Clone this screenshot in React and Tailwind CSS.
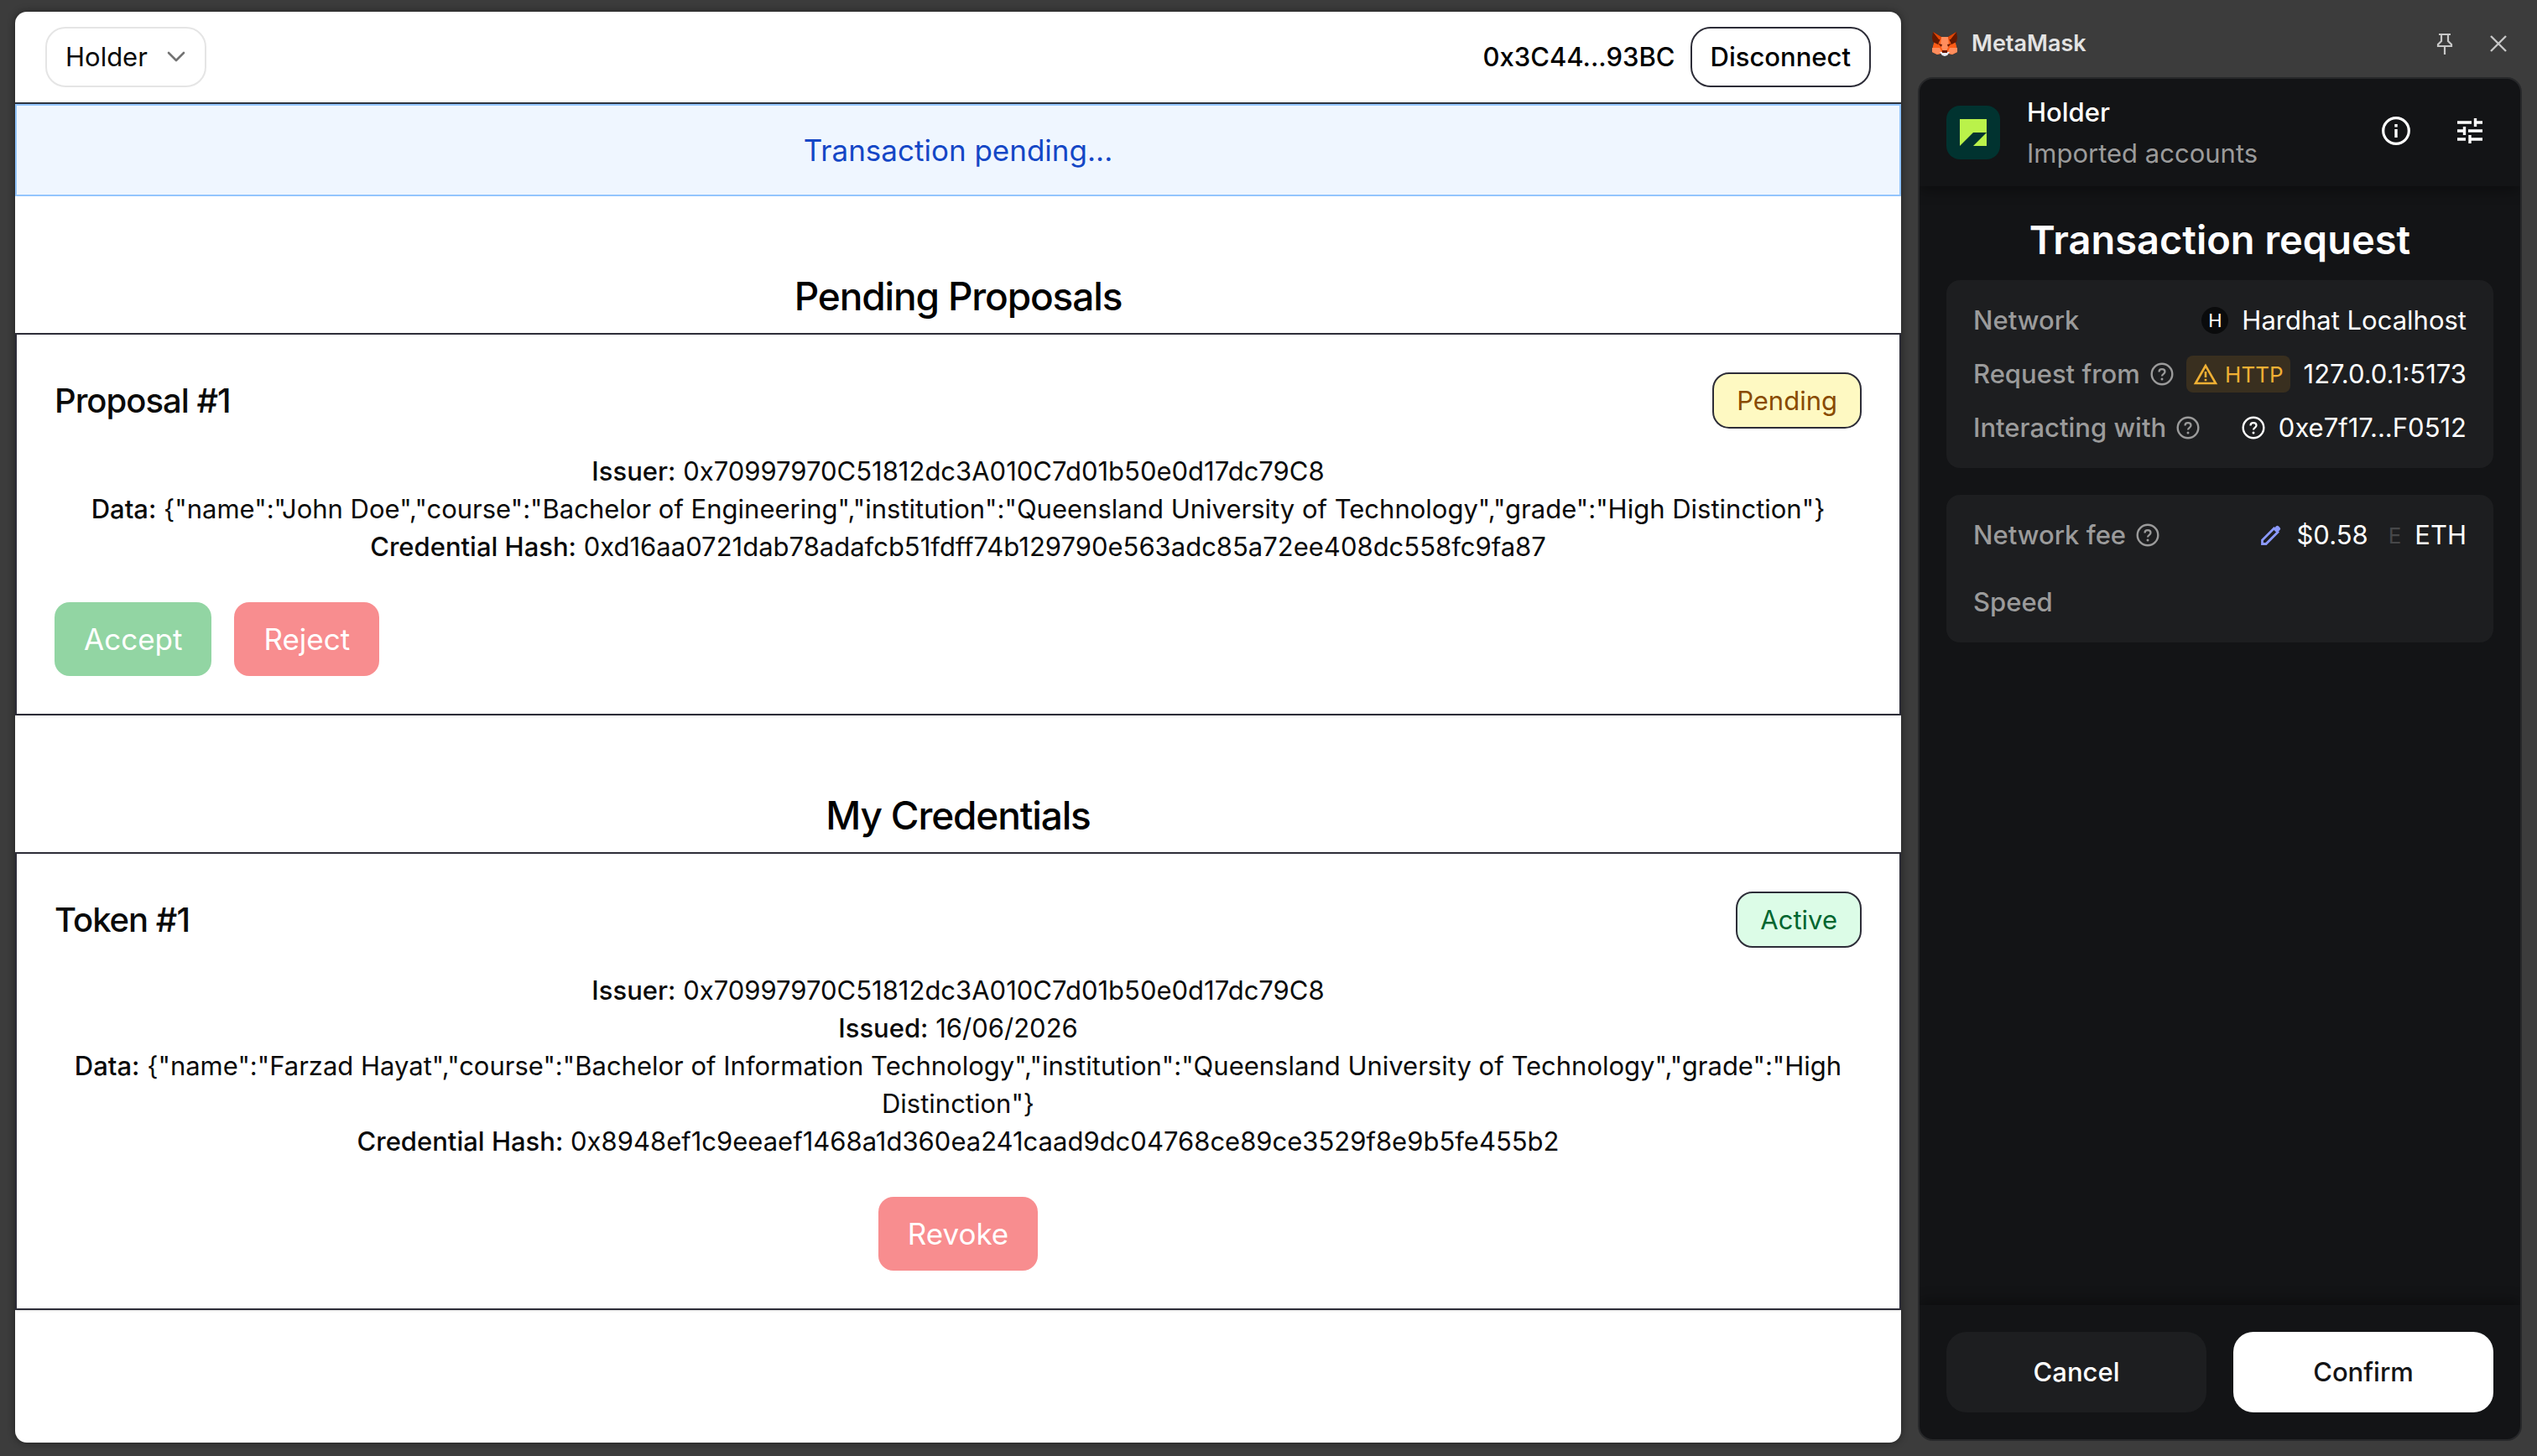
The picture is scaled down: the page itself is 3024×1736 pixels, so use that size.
function Chevron() {
  return (
    <svg viewBox="0 0 24 24" className="pointer-events-none absolute top-6 right-6 size-6" fill="none" stroke="#737373" strokeWidth="2.6" strokeLinecap="round" strokeLinejoin="round" aria-hidden="true">
      <path d="M3 7l9 9 9-9" />
    </svg>
  );
}

function Fox() {
  return (
    <svg viewBox="0 0 32 30" className="h-[30px] w-8" aria-hidden="true">
      <path d="M5 8L16 7l11 1 3 10 1 7-6 3-5-1-1 2h-6l-1-2-5 1-6-3 1-7z" fill="#ff5c16" />
      <path d="M2 1l10 6-4 9-6-3L1 8zM30 1L20 7l4 9 6-3 1-5z" fill="#661800" />
      <path d="M2 1l10 6h8l10-6-7 9H9z" fill="#e34807" />
      <path d="M12 7h8l1 10-3 7h-4l-3-7z" fill="#ff8d5d" />
      <path d="M1 20l9 0 3 6-6 2-6-3zM31 20l-9 0-3 6 6 2 6-3z" fill="#ff8d5d" />
      <path d="M8 15l5 1-1 3zM24 15l-5 1 1 3z" fill="#661800" />
      <path d="M10 25l3 0h6l3 0-3 4-3 1-3-1z" fill="#e7ebf6" />
      <path d="M13 23h6l0 3h-6z" fill="#661800" />
    </svg>
  );
}

function Pin() {
  return (
    <svg viewBox="0 0 24 28" className="h-7 w-6" fill="none" stroke="#c7c7c7" strokeWidth="2.2" aria-hidden="true">
      <path d="M5 3h14M8 3v8l-4 4v2h16v-2l-4-4V3M12 17v10" />
    </svg>
  );
}

function Close() {
  return (
    <svg viewBox="0 0 24 24" className="size-6" fill="none" stroke="#c7c7c7" strokeWidth="2.4" aria-hidden="true">
      <path d="M3 3l18 18M21 3L3 21" />
    </svg>
  );
}

function AccountLogo() {
  return (
    <svg viewBox="0 0 64 64" className="size-16 rounded-2xl" aria-hidden="true">
      <rect width="64" height="64" fill="#013330" />
      <path d="M16 16h32v16H32L16 48zM48 32v16H32z" fill="#baf24a" />
    </svg>
  );
}

function Info() {
  return (
    <svg viewBox="0 0 40 40" className="size-10" aria-hidden="true">
      <circle cx="20" cy="20" r="15.3" fill="none" stroke="#fff" strokeWidth="3.2" />
      <path d="M18.3 18h3.4v10h-3.4zM18.3 12h3.4v3.4h-3.4z" fill="#fff" />
    </svg>
  );
}

function Sliders() {
  return (
    <svg viewBox="0 0 40 40" className="size-10" aria-hidden="true" fill="none" stroke="#fff" strokeWidth="3.4">
      <path d="M5 10h17M26.500 5v10M26.500 10H35M5 20h8M13.500 15v10M18 20h17M5 30h10M20 25v10M20 30h15" />
    </svg>
  );
}

function Help({ color = "#9b9b9b" }) {
  return (
    <svg viewBox="0 0 28 28" className="size-7" fill="none" stroke={color} aria-hidden="true">
      <circle cx="14" cy="14" r="12.3" strokeWidth="2.4" />
      <path d="M10.500 11.500c0-2 1.500-3.300 3.500-3.300s3.500 1.300 3.500 3.100c0 2.400-3.500 2.600-3.500 5.200" strokeWidth="2.2" />
      <circle cx="14" cy="20" r="1.5" fill={color} stroke="none" />
    </svg>
  );
}

function Warning() {
  return (
    <svg viewBox="0 0 30 28" className="h-7 w-[30px]" fill="none" stroke="#f0b034" aria-hidden="true">
      <path d="M15 4L3 25h24z" strokeWidth="2.6" />
      <path d="M15 11v7M15 19.800v2.400" strokeWidth="2.6" />
    </svg>
  );
}

function Pencil() {
  return (
    <svg viewBox="0 0 28 28" className="size-7" aria-hidden="true">
      <path d="M3.500 24.500v-4.500L17.500 6l4.500 4.500-14 14z" fill="none" stroke="#8b99ff" strokeWidth="2.8" />
      <path d="M17 6.500l3-3q1.500-1.500 3 0l1.500 1.500q1.500 1.500 0 3l-3 3z" fill="#8b99ff" />
    </svg>
  );
}

function Section({ title, children }) {
  return (
    <section className="pt-24">
      <h2 className="mb-[21px] text-center text-[46px] leading-[46px] font-medium tracking-tight">{title}</h2>
      {children}
    </section>
  );
}

function Card({ title, badge, badgeClass, rows, children }) {
  return (
    <article className="border-2 border-[#2d2d38] px-[45px] py-[45px] text-[#0a0a0a] shadow-sm">
      <div className="flex items-center justify-between">
        <h3 className="text-[40px] leading-[56px] font-medium tracking-tight">{title}</h3>
        <span className={`rounded-[20px] border-2 border-[#2d2d38] px-[27px] py-[9px] text-[31px] leading-[45px] ${badgeClass}`}>{badge}</span>
      </div>
      <dl className="mt-7 mb-11 text-center text-[31px] leading-[45px]">
        {rows.map(([label, value]) => (
          <div key={label}>
            <dt className="inline font-medium">{label}:</dt> <dd className="inline">{value}</dd>
          </div>
        ))}
      </dl>
      {children}
    </article>
  );
}

function ActionButton({ className, children }) {
  return <button type="button" className={`rounded-[18px] px-[35px] text-[35px] leading-[88px] text-white ${className}`}>{children}</button>;
}

function DetailRow({ label, help, children }) {
  return (
    <div className="flex h-16 items-center justify-between">
      <dt className="flex items-center gap-3 font-medium text-[#9b9b9b]">
        {label}
        {help && <Help />}
      </dt>
      <dd className="flex items-center gap-4">{children}</dd>
    </div>
  );
}

export default function App() {
  return (
    <div className="flex min-h-screen gap-5 bg-[#3c3c3c] px-[18px] font-['Inter',sans-serif]">
      <main className="mt-[14px] mb-4 min-w-0 flex-1 overflow-hidden rounded-[14px] bg-white text-black shadow-[0_0_10px_rgba(0,0,0,0.45)]">
        <header className="flex items-center justify-between border-b-2 border-[#2d3440] px-9 py-[18px] text-[31px]">
          <div className="relative">
            <select aria-label="Role" className="h-[72px] w-48 appearance-none rounded-3xl border-2 border-[#e5e5e5] bg-white pl-[22px] text-[#0a0a0a]">
              <option>Holder</option>
            </select>
            <Chevron />
          </div>
          <div className="flex items-center gap-[18px] font-medium">
            <span>0x3C44...93BC</span>
            <button type="button" className="h-[72px] rounded-3xl border-2 border-[#2d2d38] px-[22px]">Disconnect</button>
          </div>
        </header>
        <div role="status" className="border-2 border-[#93c5fd] bg-[#eff6ff] text-center text-[35px] leading-[106px] text-[#1447c6]">Transaction pending...</div>

        <Section title="Pending Proposals">
          <Card
            title="Proposal #1"
            badge="Pending"
            badgeClass="bg-[#fef9c2] text-[#894b00]"
            rows={[
              ["Issuer", "0x70997970C51812dc3A010C7d01b50e0d17dc79C8"],
              ["Data", '{"name":"John Doe","course":"Bachelor of Engineering","institution":"Queensland University of Technology","grade":"High Distinction"}'],
              ["Credential Hash", "0xd16aa0721dab78adafcb51fdff74b129790e563adc85a72ee408dc558fc9fa87"],
            ]}
          >
            <div className="flex gap-[27px]">
              <ActionButton className="bg-[#92d5a3]">Accept</ActionButton>
              <ActionButton className="bg-[#f88d8f]">Reject</ActionButton>
            </div>
          </Card>
        </Section>

        <Section title="My Credentials">
          <Card
            title="Token #1"
            badge="Active"
            badgeClass="bg-[#dcfce7] text-[#016630]"
            rows={[
              ["Issuer", "0x70997970C51812dc3A010C7d01b50e0d17dc79C8"],
              ["Issued", "16/06/2026"],
              ["Data", '{"name":"Farzad Hayat","course":"Bachelor of Information Technology","institution":"Queensland University of Technology","grade":"High Distinction"}'],
              ["Credential Hash", "0x8948ef1c9eeaef1468a1d360ea241caad9dc04768ce89ce3529f8e9b5fe455b2"],
            ]}
          >
            <div className="flex justify-center">
              <ActionButton className="bg-[#f88d8f]">Revoke</ActionButton>
            </div>
          </Card>
        </Section>
      </main>

      <aside className="flex w-[720px] shrink-0 flex-col pb-[18px]">
        <header className="flex h-[92px] items-center px-4 pt-3">
          <div className="flex flex-1 items-center gap-4 text-[27px] font-semibold text-[#e3e3e3]">
            <Fox />
            <h1>MetaMask</h1>
          </div>
          <div className="flex items-center gap-10">
            <button type="button" aria-label="Pin"><Pin /></button>
            <button type="button" aria-label="Close"><Close /></button>
          </div>
        </header>
        <div className="flex flex-1 flex-col overflow-hidden rounded-[18px] border-2 border-[#27282a] bg-[#131416] text-[31px] text-white">
          <div className="flex h-32 items-center px-8 shadow-[0_4px_16px_rgba(0,0,0,0.4)]">
            <AccountLogo />
            <div className="ml-8 flex-1 leading-[49px]">
              <p className="font-medium">Holder</p>
              <p className="text-[#9b9b9b]">Imported accounts</p>
            </div>
            <div className="flex gap-12 pr-2 pb-1">
              <button type="button" aria-label="Transaction details"><Info /></button>
              <button type="button" aria-label="Settings"><Sliders /></button>
            </div>
          </div>

          <div className="flex-1 px-8">
            <h2 className="pt-[34px] pb-[18px] text-center text-[47px] leading-[60px] font-semibold">Transaction request</h2>
            <dl className="rounded-2xl bg-[#1d1e20] px-8 py-4">
              <DetailRow label="Network">
                <span className="grid size-8 place-items-center rounded-full bg-[#0a0b0c] text-[22px]">H</span>
                Hardhat Localhost
              </DetailRow>
              <DetailRow label="Request from" help>
                <span className="flex h-11 items-center gap-2 rounded-lg bg-[#392f1f] px-2 text-[26px] text-[#f0b034]">
                  <Warning />
                  HTTP
                </span>
                127.0.0.1:5173
              </DetailRow>
              <DetailRow label="Interacting with" help>
                <Help color="#fff" />
                0xe7f17...F0512
              </DetailRow>
            </dl>
            <dl className="mt-8 rounded-2xl bg-[#1d1e20] px-8 py-4">
              <DetailRow label="Network fee" help>
                <button type="button" aria-label="Edit network fee"><Pencil /></button>
                <span>$0.58</span>
                <span className="pl-2 text-[26px] text-[#464749]">E</span>
                <span>ETH</span>
              </DetailRow>
              <div className="pt-4">
                <DetailRow label="Speed" />
              </div>
            </dl>
          </div>

          <div className="grid grid-cols-2 gap-8 p-8 font-medium shadow-[0_-4px_16px_rgba(0,0,0,0.4)]">
            <button type="button" className="h-24 rounded-3xl bg-[#1d1e20]">Cancel</button>
            <button type="button" className="h-24 rounded-3xl bg-white text-[#131416]">Confirm</button>
          </div>
        </div>
      </aside>
    </div>
  );
}
